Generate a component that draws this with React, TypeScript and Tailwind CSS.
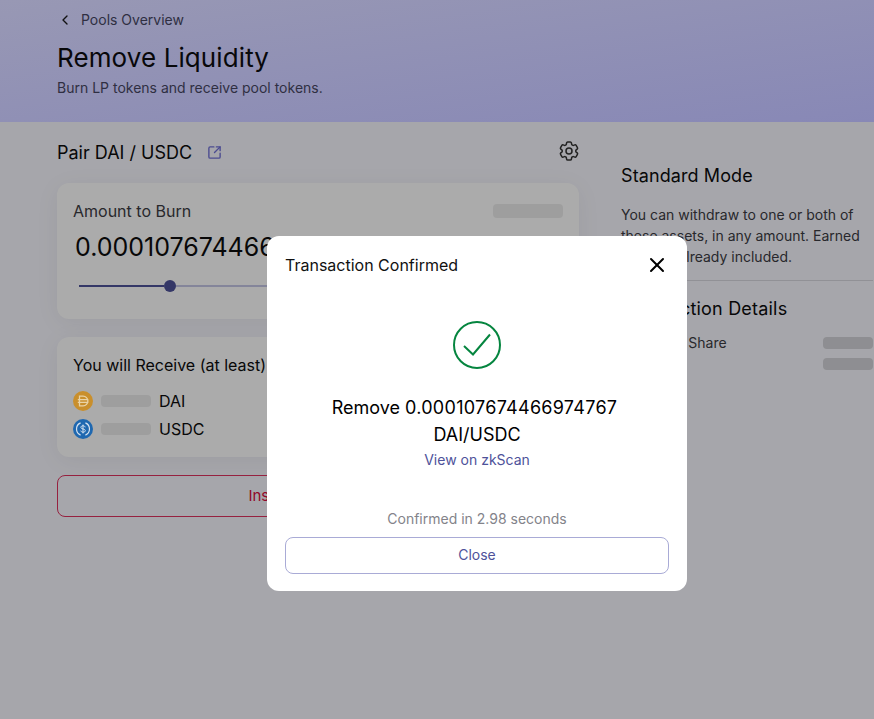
import { ChevronLeft, SquareArrowOutUpRight, X } from 'lucide-react';
import { HiOutlineCog6Tooth } from 'react-icons/hi2';

function Skeleton({ className }: { className: string }) {
  return <div className={`rounded ${className}`} />;
}

function DaiIcon() {
  return (
    <svg viewBox="0 0 20 20" className="relative z-10 h-5 w-5 shrink-0">
      <circle cx="10" cy="10" r="10" fill="#c98f2c" />
      <path d="M6.5 5.2h3.6a4.8 4.8 0 0 1 0 9.6H6.5z" fill="none" stroke="#e9d3a6" strokeWidth="1.3" />
      <path d="M4.8 8.6h10.4M4.8 11.4h10.4" stroke="#e9d3a6" strokeWidth="1.2" />
    </svg>
  );
}

function UsdcIcon() {
  return (
    <svg viewBox="0 0 20 20" className="relative z-10 h-5 w-5 shrink-0">
      <circle cx="10" cy="10" r="10" fill="#1f68b0" />
      <path d="M7.6 3.9a6.6 6.6 0 0 0 0 12.2M12.4 3.9a6.6 6.6 0 0 1 0 12.2" fill="none" stroke="#d5e2f0" strokeWidth="1.2" />
      <path d="M12.2 8.3c-.2-1-1-1.5-2.2-1.5s-2.1.6-2.1 1.6c0 2.2 4.4 1 4.4 3.2 0 1-.9 1.6-2.3 1.6-1.2 0-2-.6-2.2-1.6M10 5.6v8.8" fill="none" stroke="#d5e2f0" strokeWidth="1" />
    </svg>
  );
}

export default function App() {
  return (
    <div className="relative h-[719px] w-[874px] overflow-hidden bg-[#f8f8ff] font-['Inter',sans-serif] text-[#0c0c0d]">
      {/* Page header, already in its dimmed colours */}
      <div className="relative z-10 h-[122px] bg-gradient-to-br from-[#9898b4] to-[#8888b6] px-[57px] pt-[10px]">
        <div className="flex h-5 items-center gap-2 text-sm text-[#2f2f42]">
          <ChevronLeft className="h-4 w-4 text-[#111]" />
          <span>Pools Overview</span>
        </div>
        <h1 className="mt-[12px] text-[26px] leading-[32px] tracking-[0.1px] text-[#08080a]">Remove Liquidity</h1>
        <p className="mt-[4px] text-[14px] leading-5 text-[#2f2f42]">Burn LP tokens and receive pool tokens.</p>
      </div>

      <div className="flex gap-[42px] pl-[57px]">
        {/* Left column */}
        <div className="w-[522px] shrink-0">
          <div className="flex h-[61px] items-center justify-between">
            <div className="flex items-center gap-[15px]">
              <span className="text-lg">Pair DAI / USDC</span>
              <SquareArrowOutUpRight className="h-[15px] w-[15px] text-[#7070d8]" strokeWidth={2.2} />
            </div>
            <HiOutlineCog6Tooth className="mb-[3px] mr-[-2px] h-6 w-6 text-[#333]" />
          </div>

          <div className="h-[136px] rounded-xl bg-white px-4 pt-[18px] shadow-[0_4px_24px_rgba(0,0,0,0.06)]">
            <div className="flex items-center justify-between">
              <span className="text-base leading-5 text-[#3c3c43]">Amount to Burn</span>
              <Skeleton className="h-[14px] w-[70px] bg-[#ececec]" />
            </div>
            <div className="ml-0.5 mt-[10px] text-[25px] leading-8">0.000107674466974767</div>
            <div className="mx-1.5 mt-[17px] flex items-center">
              <div className="h-0.5 w-[85px] bg-[#4e529a]" />
              <div className="h-3 w-3 rounded-full bg-[#4e529a]" />
              <div className="h-0.5 flex-1 bg-[#c5c6e6]" />
            </div>
          </div>

          <div className="mt-[18px] h-[120px] rounded-xl bg-white px-4 pt-4 shadow-[0_4px_24px_rgba(0,0,0,0.06)]">
            <div className="text-base leading-6">You will Receive (at least)</div>
            <div className="mt-[10px] flex h-7 items-center gap-2 text-base">
              <DaiIcon />
              <Skeleton className="h-3 w-[50px] bg-[#ececec]" />
              <span>DAI</span>
            </div>
            <div className="flex h-7 items-center gap-2 text-base">
              <UsdcIcon />
              <Skeleton className="h-3 w-[50px] bg-[#ececec]" />
              <span>USDC</span>
            </div>
          </div>

          <button className="mt-[18px] h-[42px] w-full rounded-lg border border-[#e0325f] text-[15px] text-[#d90a3d]">
            Insufficient Balance
          </button>
        </div>

        {/* Right column */}
        <div className="w-[252px] shrink-0 pt-[40px]">
          <h2 className="text-lg leading-7 tracking-[0.1px]">Standard Mode</h2>
          <p className="mt-[14px] text-sm leading-[21px] text-[#3c3c43]">
            You can withdraw to one or both of these assets, in any amount. Earned fees are already included.
          </p>
          <div className="mt-[13px] border-t border-[#d8d8e0]" />
          <h2 className="mt-[14px] text-lg leading-7 tracking-[0.2px]">Transaction Details</h2>
          <div className="mt-[10px] flex items-center justify-between text-sm text-[#3c3c43]">
            <span>Your Pool Share</span>
            <Skeleton className="h-3 w-[50px] bg-[#d4d4da]" />
          </div>
          <div className="mt-[5px] flex justify-end">
            <Skeleton className="h-3 w-[50px] bg-[#d4d4da]" />
          </div>
        </div>
      </div>

      {/* Modal overlay */}
      <div className="absolute inset-0 bg-black/33" />
      <div className="absolute left-[267px] top-[236px] z-20 flex h-[355px] w-[420px] flex-col rounded-xl bg-white px-[18px] pb-[17px]">
        <div className="flex h-[58px] shrink-0 items-center justify-between">
          <span className="text-base text-[#111]">Transaction Confirmed</span>
          <X className="h-6 w-6 text-black" strokeWidth={2} />
        </div>
        <div className="mt-[27px] flex flex-col items-center">
          <svg viewBox="0 0 48 48" className="h-12 w-12">
            <circle cx="24" cy="24" r="23" fill="none" stroke="#05853f" strokeWidth="2" />
            <path d="M11 25l9 8.5L37 13.5" fill="none" stroke="#05853f" strokeWidth="2" />
          </svg>
          <div className="mt-[25px] w-[320px] text-center text-lg leading-[27px] text-black">
            Remove <span className="mr-[5px] tracking-[0.28px]">0.000107674466974767</span> DAI/USDC
          </div>
          <a className="mt-[2px] text-sm leading-5 text-[#4e529a]">View on zkScan</a>
        </div>
        <div className="mt-auto text-center text-sm leading-5 text-[#83838a]">Confirmed in 2.98 seconds</div>
        <button className="mt-[8px] h-[37px] shrink-0 rounded-lg border border-[#a9abd6] pb-0.5 text-sm text-[#4e529a]">Close</button>
      </div>
    </div>
  );
}
